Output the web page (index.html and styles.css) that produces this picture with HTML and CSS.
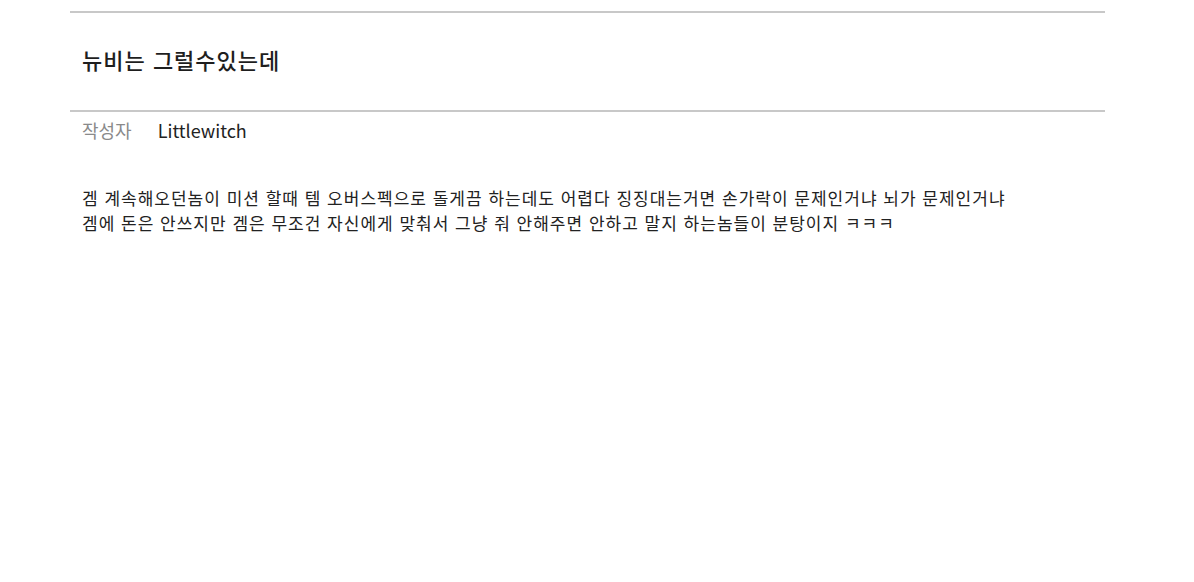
FILE: index.html
```html
<!DOCTYPE html>
<html lang="ko">
<head>
  <meta charset="UTF-8" />
  <title>뉴비는 그럴수있는데</title>
  <link rel="stylesheet" href="styles.css">
</head>
<body>
<div class="post">
  <div class="post-head">
    <h2 class="post-title">뉴비는 그럴수있는데</h2>
  </div>
  <div class="post-meta">
    <span class="meta-label">작성자</span>
    <span class="meta-value">Littlewitch</span>
  </div>
  <div class="post-body">
    겜 계속해오던놈이 미션 할때 템 오버스펙으로 돌게끔 하는데도 어렵다 징징대는거면 손가락이 문제인거냐 뇌가 문제인거냐<br>
    겜에 돈은 안쓰지만 겜은 무조건 자신에게 맞춰서 그냥 줘 안해주면 안하고 말지 하는놈들이 분탕이지 ㅋㅋㅋ
  </div>
</div>
</body>
</html>
```

FILE: styles.css
```css
body {
  margin: 0;
  background: #fff;
  font-family: "Noto Sans CJK KR", "Noto Sans", sans-serif;
  color: #222;
}
.post {
  width: 1035px;
  margin: 11px 0 0 70px;
}
.post-head {
  border-top: 2px solid #c8c8c8;
  border-bottom: 2px solid #c8c8c8;
  height: 97px;
  padding: 0 12px;
  display: flex;
  align-items: center;
}
.post-title {
  margin: 0 0 6px 0;
  font-size: 22px;
  font-weight: 500;
  letter-spacing: 1px;
  color: #1e1e1e;
}
.post-meta {
  display: flex;
  gap: 26px;
  padding: 6px 12px 0 12px;
  font-size: 18px;
  line-height: 24px;
}
.meta-label {
  color: #8a8a8a;
}
.meta-value {
  color: #222;
}
.post-body {
  padding: 43px 12px 0 12px;
  font-size: 17px;
  line-height: 25px;
  letter-spacing: 1px;
  color: #222;
}
```
